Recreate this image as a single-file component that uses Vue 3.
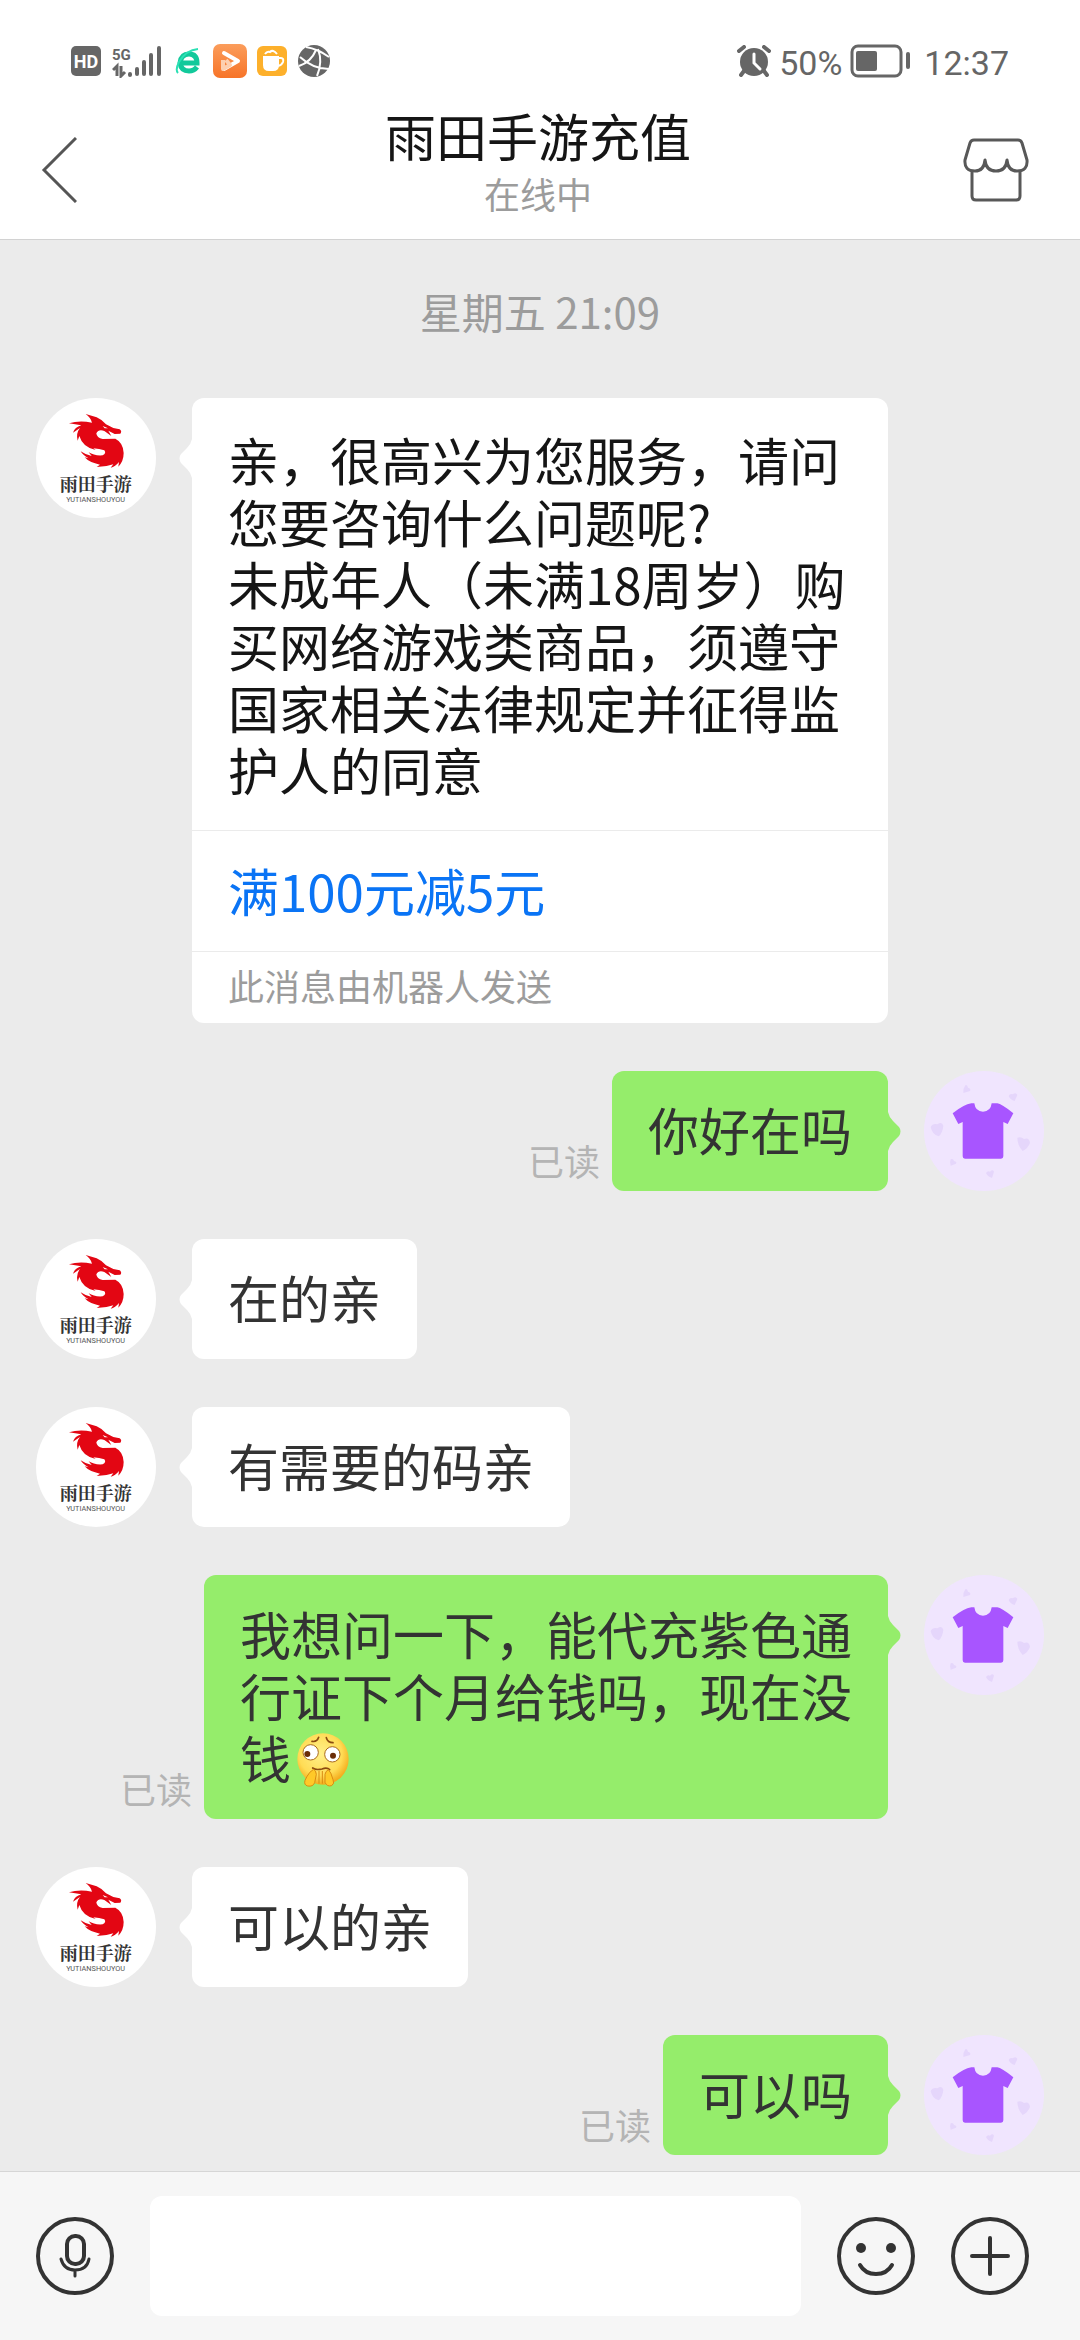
<script setup>
const messages = [
  {
    id: 1,
    from: 'shop',
    card: true,
    lines: [
      '亲，很高兴为您服务，请问您要咨询什么问题呢?',
      '未成年人（未满18周岁）购买网络游戏类商品，须遵守国家相关法律规定并征得监护人的同意',
    ],
    link: '满100元减5元',
    note: '此消息由机器人发送',
  },
  { id: 2, from: 'me', text: '你好在吗' },
  { id: 3, from: 'shop', text: '在的亲' },
  { id: 4, from: 'shop', text: '有需要的码亲' },
  { id: 5, from: 'me', text: '我想问一下，能代充紫色通行证下个月给钱吗，现在没钱', emoji: true },
  { id: 6, from: 'shop', text: '可以的亲' },
  { id: 7, from: 'me', text: '可以吗' },
]
</script>

<template>
  <div class="app">
    <header class="top">
      <div class="status">
        <div class="status-group">
          <svg class="i-hd" width="30" height="30" viewBox="0 0 30 30">
            <rect width="30" height="30" rx="5" fill="#666" />
            <text x="15" y="22" text-anchor="middle" font-size="18" font-weight="700" fill="#fff">HD</text>
          </svg>
          <svg class="i-signal" width="50" height="34" viewBox="0 0 50 34">
            <text x="0" y="16" font-size="15" font-weight="700" fill="#666">5G</text>
            <path d="M1 26L5 22V32M9 22V32L13 28" fill="none" stroke="#666" stroke-width="3" />
            <path d="M18 30V31M25 25V30M32 18V30M39 11V30M47 4V30" stroke="#666" stroke-width="4" stroke-linecap="round" />
          </svg>
          <svg class="i-browser" width="28" height="32" viewBox="0 0 28 32">
            <path d="M6 18H23Q23 9 15 9Q7 9 6 18Q7 26 15 26Q20 26 23 22" fill="none" stroke="#12c99b" stroke-width="5" />
            <path d="M4 28Q1 25 5 17Q12 5 24 4" fill="none" stroke="#2be0b4" stroke-width="2" />
          </svg>
          <svg class="i-video" width="34" height="34" viewBox="0 0 34 34">
            <defs>
              <linearGradient id="orange" x1="0" y1="0" x2="0" y2="1">
                <stop offset="0" stop-color="#fb9d5b" />
                <stop offset="1" stop-color="#f77428" />
              </linearGradient>
            </defs>
            <rect width="34" height="34" rx="7" fill="url(#orange)" />
            <path d="M11 9L25 17L11 25" fill="none" stroke="#fff" stroke-width="4" stroke-linecap="round" stroke-linejoin="round" />
            <path d="M10 16V25L17 21L13 16" fill="none" stroke="#fdd0b0" stroke-width="4" stroke-linejoin="round" />
          </svg>
          <svg class="i-cup" width="30" height="30" viewBox="0 0 30 30">
            <rect width="30" height="30" rx="6" fill="#fdb02b" />
            <path d="M6 10H22V19Q22 25 16 25H12Q6 25 6 19Z" fill="#fff" />
            <path d="M22 12H24Q27 12 26 16Q25 19 21 20M8 8Q10 5 13 6Q16 3 20 8" fill="none" stroke="#fff" stroke-width="2" />
          </svg>
          <svg class="i-globe" width="32" height="32" viewBox="0 0 32 32">
            <circle cx="16" cy="16" r="16" fill="#666" />
            <path d="M8 2Q20 4 31 12M20 4Q25 17 19 31M18 5Q13 17 1 21M2 12Q15 24 31 24" fill="none" stroke="#fff" stroke-width="2" />
          </svg>
        </div>
        <div class="status-group">
          <svg width="34" height="32" viewBox="0 0 34 32">
            <circle cx="17" cy="17" r="14" fill="#666" />
            <path d="M2 6L7 2M32 6L27 2M7 26L4 30M27 26L30 30" stroke="#666" stroke-width="4" stroke-linecap="round" />
            <path d="M17 9V18L23 24" fill="none" stroke="#fff" stroke-width="3" stroke-linecap="round" />
          </svg>
          <span class="percent">50%</span>
          <svg class="battery" width="60" height="34" viewBox="0 0 60 34">
            <rect x="2" y="2" width="49" height="30" rx="6" fill="none" stroke="#666" stroke-width="3" />
            <rect x="6" y="7" width="21" height="20" rx="2" fill="#666" />
            <rect x="56" y="8" width="4" height="17" rx="2" fill="#666" />
          </svg>
          <span class="clock">12:37</span>
        </div>
      </div>
      <nav class="nav">
        <button class="icon-btn back" type="button" aria-label="返回">
          <svg width="36" height="66" viewBox="0 0 36 66">
            <path d="M35 1L3 33L35 65" fill="none" stroke="#555" stroke-width="3" />
          </svg>
        </button>
        <div class="heading">
          <h1>雨田手游充值</h1>
          <p>在线中</p>
        </div>
        <button class="icon-btn" type="button" aria-label="店铺">
          <svg width="66" height="64" viewBox="0 0 66 64">
            <g fill="none" stroke="#585858" stroke-width="3" stroke-linejoin="round">
              <path d="M11 2H55Q58 2 59 5L64 22Q65 33 54 33Q45 33 44 22Q43 33 33 33Q23 33 22 22Q21 33 12 33Q1 33 2 22L7 5Q8 2 11 2Z" />
              <path d="M9 32V58Q9 62 13 62H53Q57 62 57 58V32" />
            </g>
          </svg>
        </button>
      </nav>
    </header>

    <main class="chat">
      <time class="stamp">星期五 21:09</time>
      <ul class="list">
        <li v-for="m in messages" :key="m.id" class="row" :class="m.from">
          <svg v-if="m.from === 'shop'" class="avatar" viewBox="0 0 360 360">
            <circle cx="180" cy="180" r="180" fill="#fff" />
            <path
              fill="#e30613"
              d="M149 48L182 58Q200 66 210 79L232 90L251 94Q259 100 253 107L236 108L217 98L226 114L205 99Q188 92 181 106Q182 120 200 123L238 122Q262 134 263 165Q263 190 247 206L249 192Q238 206 224 209L232 199Q210 207 182 207L192 200Q160 194 146 178L158 181Q141 172 134 160Q150 171 167 174L158 163Q175 174 200 172Q212 166 205 157Q190 152 172 151L179 156Q140 148 130 114L125 128Q119 106 132 90L111 104Q116 88 136 82L99 76Q130 66 168 74Q165 60 149 48Z"
            />
            <path d="M200 84L216 91L206 91Z" fill="#fff" />
            <text class="logo-name" x="179" y="278" text-anchor="middle" font-size="54" font-weight="700" fill="#333">雨田手游</text>
            <text x="179" y="312" text-anchor="middle" font-size="22" fill="#555">YUTIANSHOUYOU</text>
          </svg>
          <svg v-else class="avatar" viewBox="0 0 360 360">
            <circle cx="180" cy="180" r="180" fill="#f0e5fe" />
            <g fill="#e5d6fb">
              <path d="M124 43Q130 40 132 50Q142 52 138 60L118 66Q116 54 124 43Z" />
              <path d="M254 75Q258 66 266 70Q276 62 280 72L272 90Q258 86 254 75Z" />
              <path d="M20 168Q26 156 40 160Q54 150 58 164Q56 186 44 196Q24 190 20 168Z" />
              <path d="M280 200Q292 196 300 204Q316 198 318 216Q312 232 296 240Q280 222 280 200Z" />
              <path d="M80 265Q88 262 90 270Q100 272 96 278L80 284Q76 274 80 265Z" />
              <path d="M186 306Q190 299 198 302Q206 294 210 302L204 321Q190 316 186 306Z" />
            </g>
            <path
              fill="#a855ff"
              d="M142 97L151 97Q154 122 177 122Q200 122 203 97L220 97Q232 98 268 127L251 159L238 153V256Q238 263 231 263H123Q116 263 116 256V153L103 159L86 127Q120 100 142 97Z"
            />
          </svg>

          <section v-if="m.card" class="bubble card">
            <svg class="tail" viewBox="0 0 13 39"><path d="M13 0Q12 5 8 9L2 15Q-1 19 2 24L8 30Q12 34 13 39Z" /></svg>
            <div class="card-body">
              <p v-for="line in m.lines" :key="line">{{ line }}</p>
            </div>
            <a class="card-link" href="#">{{ m.link }}</a>
            <p class="card-note">{{ m.note }}</p>
          </section>
          <p v-else class="bubble plain">
            <svg class="tail" viewBox="0 0 13 39"><path d="M13 0Q12 5 8 9L2 15Q-1 19 2 24L8 30Q12 34 13 39Z" /></svg>
            {{ m.text }}<svg v-if="m.emoji" class="emoji" viewBox="0 0 156 162">
              <defs>
                <radialGradient id="face" cx="0.45" cy="0.4" r="0.6">
                  <stop offset="0" stop-color="#fff08a" />
                  <stop offset="0.7" stop-color="#ffdc55" />
                  <stop offset="1" stop-color="#f3ab1c" />
                </radialGradient>
              </defs>
              <circle cx="78" cy="78" r="77" fill="url(#face)" />
              <g fill="none" stroke="#8a4a10" stroke-width="5" stroke-linecap="round">
                <path d="M45 25Q60 28 65 13M88 14Q92 29 108 29" />
                <path d="M47 105Q56 112 75 108Q90 102 98 110" />
              </g>
              <g fill="#fff" stroke="#a86a20" stroke-width="3">
                <circle cx="41" cy="58" r="23" />
                <circle cx="106" cy="64" r="23" />
              </g>
              <circle cx="31" cy="63" r="9" fill="#6b2d08" />
              <circle cx="108" cy="68" r="9" fill="#6b2d08" />
              <path
                fill="#ffc928"
                stroke="#d98b12"
                stroke-width="3"
                stroke-linejoin="round"
                d="M50 109Q57 112 58 124L53 149Q48 162 32 159Q20 156 24 142Q36 116 50 109ZM94 110Q86 114 84 124L84 148Q90 162 104 158Q114 152 108 140Q102 116 94 110ZM66 114V152M76 114V152"
              />
            </svg>
          </p>
          <span v-if="m.from === 'me'" class="read">已读</span>
        </li>
      </ul>
    </main>

    <form class="composer" @submit.prevent>
      <button class="icon-btn" type="button" aria-label="语音">
        <svg width="78" height="78" viewBox="0 0 78 78">
          <g fill="none" stroke="#333" stroke-width="4" stroke-linecap="round">
            <circle cx="39" cy="39" r="37" />
            <rect x="31" y="19" width="17" height="28" rx="8" />
            <path d="M25 42Q28 53 39 53Q51 53 53 42M39 53V59" stroke-width="3" />
          </g>
        </svg>
      </button>
      <input class="field" type="text" aria-label="输入消息" />
      <button class="icon-btn" type="button" aria-label="表情">
        <svg width="78" height="78" viewBox="0 0 78 78">
          <circle cx="39" cy="39" r="37" fill="none" stroke="#333" stroke-width="4" />
          <circle cx="24" cy="31" r="5" fill="#333" />
          <circle cx="54" cy="31" r="5" fill="#333" />
          <path d="M23 48Q28 57 39 57Q50 57 55 48" fill="none" stroke="#333" stroke-width="4" stroke-linecap="round" />
        </svg>
      </button>
      <button class="icon-btn" type="button" aria-label="更多">
        <svg width="78" height="78" viewBox="0 0 78 78">
          <g fill="none" stroke="#333" stroke-width="4" stroke-linecap="round">
            <circle cx="39" cy="39" r="37" />
            <path d="M39 21V57M21 39H57" />
          </g>
        </svg>
      </button>
    </form>
  </div>
</template>

<style>
body {
  background: #ebebeb;
}
</style>

<style scoped>
.app {
  display: flex;
  flex-direction: column;
  min-height: 100vh;
  background: #ebebeb;
  color: #333;
  font-family: "Noto Sans CJK SC", sans-serif;
}
h1,
p,
ul {
  margin: 0;
  padding: 0;
}
svg {
  display: block;
  flex: none;
}
svg text {
  font-family: Roboto, sans-serif;
}
svg .logo-name {
  font-family: "Noto Serif CJK SC", "Noto Sans CJK SC", serif;
}
.icon-btn {
  flex: none;
  padding: 0;
  border: 0;
  background: none;
}

.top {
  background: #fff;
  border-bottom: 1px solid #d2d2d2;
}
.status {
  display: flex;
  justify-content: space-between;
  align-items: center;
  height: 78px;
  padding: 22px 71px 0;
  color: #666;
  font-family: Roboto, sans-serif;
  font-size: 34px;
}
.status-group {
  display: flex;
  align-items: center;
}
.i-signal {
  margin-left: 11px;
}
.i-browser {
  margin-left: 12px;
}
.i-video {
  margin-left: 11px;
}
.i-cup {
  margin-left: 10px;
}
.i-globe {
  margin-left: 11px;
}
.percent,
.clock {
  padding-top: 3px;
}
.percent {
  margin-left: 8px;
}
.battery {
  margin-left: 8px;
}
.clock {
  margin-left: 14px;
}
.nav {
  display: flex;
  justify-content: space-between;
  align-items: center;
  height: 139px;
  padding: 0 51px 0 41px;
}
.nav .icon-btn {
  display: flex;
  width: 66px;
}
.nav .back {
  width: 72px;
}
.heading {
  padding-bottom: 16px;
  text-align: center;
}
.heading h1 {
  color: #151515;
  font-size: 51px;
  font-weight: 400;
  line-height: 62px;
}
.heading p {
  color: #9c9c9c;
  font-size: 36px;
  line-height: 54px;
}

.chat {
  flex: 1;
  padding: 41px 36px 14px;
}
.stamp {
  display: block;
  margin-bottom: 57px;
  color: #9c9c9c;
  font-size: 42px;
  line-height: 60px;
  text-align: center;
}
.list {
  display: flex;
  flex-direction: column;
  gap: 48px;
  list-style: none;
}
.row {
  display: flex;
  align-items: flex-start;
}
.me {
  flex-direction: row-reverse;
}
.avatar {
  width: 120px;
  height: 120px;
}
.bubble {
  position: relative;
  box-sizing: border-box;
  margin: 0 36px;
  border-radius: 12px;
  background: #fff;
  font-size: 51px;
  line-height: 62px;
}
.plain {
  max-width: 684px;
  padding: 27px 36px 31px;
}
.me .bubble {
  margin-left: 12px;
  background: #95ed6b;
}
.tail {
  position: absolute;
  top: 41px;
  right: 100%;
  width: 13px;
  height: 39px;
  fill: #fff;
}
.me .tail {
  right: auto;
  left: 100%;
  fill: #95ed6b;
  transform: scaleX(-1);
}
.card {
  max-width: 696px;
  color: #151515;
}
.card-body {
  padding: 30px 36px;
}
.card-link {
  display: block;
  padding: 28px 36px 30px;
  border-top: 1px solid #ebebeb;
  color: #0a74f5;
  text-decoration: none;
}
.card-note {
  padding: 0 36px 5px;
  border-top: 1px solid #ebebeb;
  color: #9c9c9c;
  font-size: 36px;
  line-height: 66px;
}
.emoji {
  display: inline-block;
  width: 52px;
  height: 54px;
  margin-left: 6px;
  vertical-align: -8px;
}
.read {
  align-self: flex-end;
  margin-bottom: 10px;
  color: #b4b4b4;
  font-size: 36px;
  line-height: 42px;
}

.composer {
  display: flex;
  align-items: center;
  gap: 36px;
  padding: 24px 51px 24px 36px;
  border-top: 1px solid #d6d6d6;
  background: #f6f6f6;
}
.field {
  flex: 1;
  min-width: 0;
  height: 120px;
  box-sizing: border-box;
  padding: 0 24px;
  border: 0;
  border-radius: 12px;
  background: #fff;
  font: inherit;
  font-size: 51px;
}
</style>
